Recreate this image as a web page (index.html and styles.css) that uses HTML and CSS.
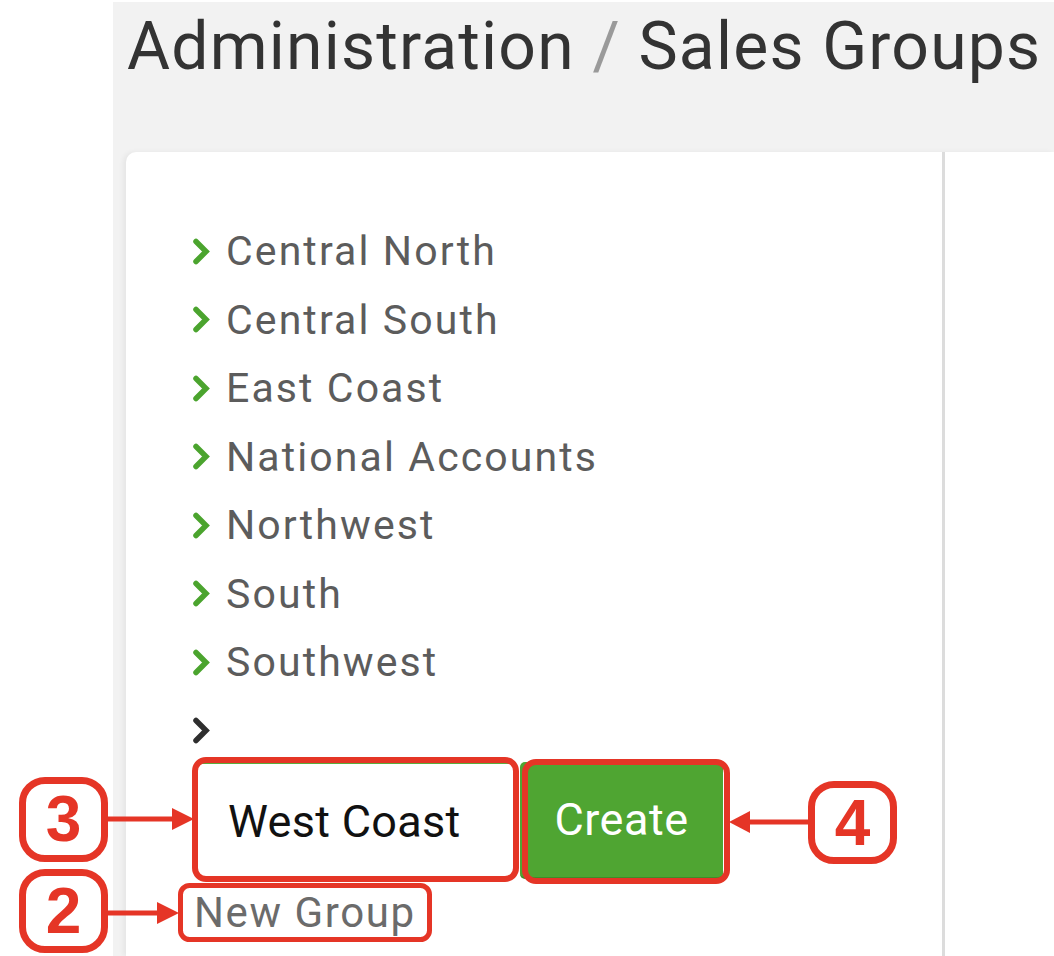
FILE: index.html
```html
<!DOCTYPE html>
<html lang="en">
<head>
<meta charset="utf-8">
<title>Administration / Sales Groups</title>
<link rel="stylesheet" href="styles.css">
</head>
<body>
<div class="app">
  <aside class="side"></aside>
  <main class="main">
    <h1 class="title">Administration <span class="sep">/</span> Sales Groups</h1>
    <div class="card">
      <section class="tree">
        <ul class="groups">
          <li class="group"><svg class="chev" viewBox="0 0 17 27"><polyline points="3,3.5 13,13.5 3,23.5"/></svg><span>Central North</span></li>
          <li class="group"><svg class="chev" viewBox="0 0 17 27"><polyline points="3,3.5 13,13.5 3,23.5"/></svg><span>Central South</span></li>
          <li class="group"><svg class="chev" viewBox="0 0 17 27"><polyline points="3,3.5 13,13.5 3,23.5"/></svg><span>East Coast</span></li>
          <li class="group"><svg class="chev" viewBox="0 0 17 27"><polyline points="3,3.5 13,13.5 3,23.5"/></svg><span>National Accounts</span></li>
          <li class="group"><svg class="chev" viewBox="0 0 17 27"><polyline points="3,3.5 13,13.5 3,23.5"/></svg><span>Northwest</span></li>
          <li class="group"><svg class="chev" viewBox="0 0 17 27"><polyline points="3,3.5 13,13.5 3,23.5"/></svg><span>South</span></li>
          <li class="group"><svg class="chev" viewBox="0 0 17 27"><polyline points="3,3.5 13,13.5 3,23.5"/></svg><span>Southwest</span></li>
          <li class="group group-new"><svg class="chev chev-dark" viewBox="0 0 17 27"><polyline points="3,3.5 13,13.5 3,23.5"/></svg><span></span></li>
        </ul>
        <form class="new-row">
          <input class="name-input" type="text" value="West Coast">
          <button class="create-btn" type="button">Create</button>
        </form>
        <a class="new-link">New Group</a>
      </section>
      <section class="detail"></section>
    </div>
  </main>
</div>

<div class="annotations">
  <svg class="marks" viewBox="0 0 1054 956" width="1054" height="956">
    <rect x="195" y="760" width="321" height="119" rx="11" class="mark-box"/>
    <rect x="525" y="762" width="202" height="119" rx="11" class="mark-box"/>
    <rect x="180.5" y="885.5" width="249" height="54" rx="9" class="mark-box mark-thin"/>
    <line x1="106" y1="819" x2="176" y2="819" class="mark-line"/>
    <polygon points="172,808 194,819 172,830" class="mark-head"/>
    <line x1="106" y1="913" x2="161" y2="913" class="mark-line"/>
    <polygon points="157,902 179,913 157,924" class="mark-head"/>
    <line x1="810" y1="822" x2="746" y2="822" class="mark-line"/>
    <polygon points="750,811 729,822 750,833" class="mark-head"/>
  </svg>
  <div class="badge badge-3">3</div>
  <div class="badge badge-2">2</div>
  <div class="badge badge-4">4</div>
</div>
</body>
</html>
```

FILE: styles.css
```css
html, body {
  margin: 0;
  padding: 0;
  background: #ffffff;
}

body {
  width: 1054px;
  height: 956px;
  overflow: hidden;
  position: relative;
  font-family: Roboto, "Liberation Sans", Arial, sans-serif;
}

.app {
  display: flex;
  height: 956px;
}

.side {
  width: 113px;
  flex: 0 0 113px;
  background: #ffffff;
}

.main {
  flex: 1 1 auto;
  margin-top: 2px;
  background: #f2f2f2;
  padding-left: 13px;
  display: flex;
  flex-direction: column;
  min-width: 0;
}

.title {
  margin: 0;
  padding: 5px 0 0 1px;
  font-weight: 400;
  font-size: 66px;
  line-height: 79px;
  letter-spacing: 1.2px;
  color: #333333;
  white-space: nowrap;
  overflow: hidden;
}

.sep {
  color: #9a9a9a;
}

.card {
  margin-top: 66px;
  flex: 1 1 auto;
  background: #ffffff;
  border-radius: 10px 0 0 0;
  box-shadow: -3px 0 5px rgba(0, 0, 0, 0.05);
  display: flex;
}

.tree {
  width: 819px;
  flex: 0 0 819px;
  border-right: 3px solid #dcdcdc;
  padding: 65px 0 0 67px;
  box-sizing: border-box;
}

.detail {
  flex: 1 1 auto;
}

.groups {
  list-style: none;
  margin: 0;
  padding: 0;
}

.group {
  display: flex;
  align-items: center;
  height: 68.5px;
  gap: 16px;
  font-size: 41px;
  letter-spacing: 2.1px;
  color: #5c5c5c;
}

.chev {
  width: 17px;
  height: 27px;
  flex: 0 0 17px;
}

.chev polyline {
  fill: none;
  stroke: #4ba42e;
  stroke-width: 5.5;
  stroke-linecap: round;
  stroke-linejoin: miter;
}

.chev-dark polyline {
  stroke: #2e2e2e;
}

.new-row {
  display: flex;
  align-items: stretch;
  margin: -3px 0 0 3px;
  height: 117px;
  gap: 4px;
}

.name-input {
  width: 320px;
  box-sizing: border-box;
  border: 1px solid #dadada;
  border-top: 2px solid #5aad3c;
  border-radius: 6px;
  background: #ffffff;
  padding: 0 0 0 31px;
  font-family: Roboto, "Liberation Sans", Arial, sans-serif;
  font-size: 45px;
  letter-spacing: 0.3px;
  color: #111111;
  outline: none;
}

.create-btn {
  width: 203px;
  box-sizing: border-box;
  border: none;
  border-bottom: 2px solid #3f8c29;
  border-radius: 5px;
  background: #4fa532;
  color: #ffffff;
  font-family: Roboto, "Liberation Sans", Arial, sans-serif;
  font-size: 45px;
  letter-spacing: 0.5px;
  padding: 0;
}

.new-link {
  display: block;
  margin-top: 9px;
  margin-left: 1px;
  font-size: 42px;
  line-height: 50px;
  letter-spacing: 1.6px;
  color: #6b6b6b;
}

/* annotation overlays */
.annotations {
  position: absolute;
  left: 0;
  top: 0;
  width: 1054px;
  height: 956px;
  pointer-events: none;
}

.marks {
  position: absolute;
  left: 0;
  top: 0;
}

.mark-box {
  fill: none;
  stroke: #e53526;
  stroke-width: 6;
}

.mark-thin {
  stroke-width: 5;
}

.mark-line {
  stroke: #e53526;
  stroke-width: 5;
}

.mark-head {
  fill: #e53526;
}

.badge {
  position: absolute;
  width: 89px;
  height: 85px;
  box-sizing: border-box;
  border: 7px solid #e53526;
  border-radius: 26px;
  background: #ffffff;
  color: #e53526;
  font-family: "Liberation Sans", Arial, sans-serif;
  font-weight: 700;
  font-size: 64px;
  line-height: 71px;
  text-align: center;
}

.badge-3 {
  left: 19px;
  top: 777px;
}

.badge-2 {
  left: 19px;
  top: 869px;
  height: 84px;
}

.badge-4 {
  left: 808px;
  top: 781px;
  height: 83px;
}
```
